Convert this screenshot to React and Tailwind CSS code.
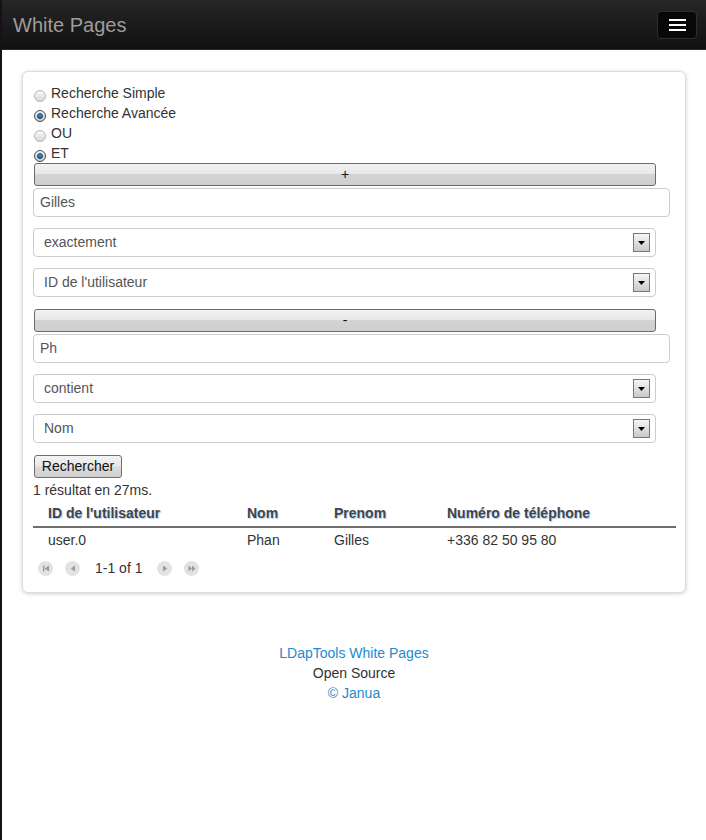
import React from "react";

function Radio({ checked, label }) {
  return (
    <div className="flex h-5 items-center">
      <span
        className={
          "mt-[6px] mr-[5px] ml-[1px] flex h-[12px] w-[12px] items-center justify-center rounded-full border " +
          (checked
            ? "border-[#4a4a4a] bg-gradient-to-b from-[#f4f4f4] to-[#c8c8c8]"
            : "border-[#b5b5b5] bg-gradient-to-b from-[#f8f8f8] to-[#d8d8d8]")
        }
      >
        {checked && (
          <span className="h-[6px] w-[6px] rounded-full bg-gradient-to-b from-[#4aa6e8] to-[#0b5ea6] border border-[#1b3a5a]" />
        )}
      </span>
      <span>{label}</span>
    </div>
  );
}

function GrayButton({ children, className }) {
  return (
    <div
      className={
        "flex h-[23px] w-[622px] ml-[1px] items-center justify-center rounded-[3px] border border-[#6b6b6b] bg-[linear-gradient(to_bottom,#f2f2f2_0%,#e8e8e8_45%,#d3d3d3_50%,#cfcfcf_100%)] text-[14px] text-[#111] " +
        (className || "")
      }
    >
      {children}
    </div>
  );
}

function TextInput({ value, className }) {
  return (
    <div
      className={
        "flex h-[29px] w-[637px] items-center rounded-[4px] border border-[#cccccc] bg-white pl-[6px] text-[14px] text-[#555] " +
        (className || "")
      }
    >
      {value}
    </div>
  );
}

function Select({ value, className }) {
  return (
    <div
      className={
        "flex h-[29px] w-[623px] items-center justify-between rounded-[4px] border border-[#cccccc] bg-white pl-[10px] pr-[5px] text-[14px] text-[#555] " +
        (className || "")
      }
    >
      <span>{value}</span>
      <span className="flex h-[19px] w-[17px] items-center justify-center border border-[#777] bg-gradient-to-b from-[#f6f6f6] to-[#c9c9c9]">
        <svg width="7" height="4" viewBox="0 0 7 4">
          <path d="M0 0 L7 0 L3.5 4 Z" fill="#000" />
        </svg>
      </span>
    </div>
  );
}

function PagerIcon({ type }) {
  return (
    <span className="flex h-[15px] w-[15px] items-center justify-center rounded-full bg-[#e2e2e2]">
      <svg width="8" height="7" viewBox="0 0 8 7">
        {type === "first" && (
          <>
            <rect x="1" y="0.5" width="1.4" height="6" fill="#9a9a9a" />
            <path d="M7 0.5 L2.6 3.5 L7 6.5 Z" fill="#9a9a9a" />
          </>
        )}
        {type === "prev" && <path d="M6 0.5 L1.8 3.5 L6 6.5 Z" fill="#9a9a9a" />}
        {type === "next" && <path d="M2 0.5 L6.2 3.5 L2 6.5 Z" fill="#9a9a9a" />}
        {type === "last" && (
          <>
            <path d="M0.5 0.5 L4 3.5 L0.5 6.5 Z" fill="#9a9a9a" />
            <path d="M4 0.5 L7.5 3.5 L4 6.5 Z" fill="#9a9a9a" />
          </>
        )}
      </svg>
    </span>
  );
}

export default function App() {
  return (
    <div
      className="min-h-[840px] border-l-2 border-[#141418] bg-white text-[14px] text-[#333]"
      style={{ fontFamily: '"Liberation Sans", Arial, sans-serif' }}
    >
      <header className="flex h-[50px] items-center justify-between border-b border-[#2a2a2a] bg-gradient-to-b from-[#262626] to-[#111111] pl-[11px] pr-[9px]">
        <span className="text-[20px] text-[#9d9d9d]">White Pages</span>
        <span className="flex h-[28px] w-[40px] flex-col items-center justify-center gap-[3px] rounded-[4px] border border-[#2e2e2e] bg-[#080808]">
          <span className="h-[2px] w-[17px] bg-white" />
          <span className="h-[2px] w-[17px] bg-white" />
          <span className="h-[2px] w-[17px] bg-white" />
        </span>
      </header>

      <div className="mx-[20px] mt-[21px] rounded-[6px] border border-[#dcdcdc] bg-white pl-[10px] pt-[11px] pb-[16px] shadow-[0_1px_4px_rgba(0,0,0,0.18)]">
        <Radio label="Recherche Simple" />
        <Radio checked label="Recherche Avancée" />
        <Radio label="OU" />
        <Radio checked label="ET" />

        <GrayButton>+</GrayButton>
        <TextInput value="Gilles" className="mt-[2px]" />
        <Select value="exactement" className="mt-[11px]" />
        <Select value="ID de l'utilisateur" className="mt-[11px]" />

        <GrayButton className="mt-[12px]">-</GrayButton>
        <TextInput value="Ph" className="mt-[2px]" />
        <Select value="contient" className="mt-[11px]" />
        <Select value="Nom" className="mt-[11px]" />

        <div className="mt-[12px] ml-[1px] flex h-[23px] w-[88px] items-center justify-center rounded-[3px] border border-[#707070] bg-[linear-gradient(to_bottom,#f3f3f3_0%,#e9e9e9_45%,#dadada_55%,#d0d0d0_100%)] text-[14px] text-[#111]">
          Rechercher
        </div>
        <div className="mt-[3px] h-[18px] leading-[18px]">1 résultat en 27ms.</div>

        <div className="mt-[2px] w-[643px]">
          <div className="flex h-[27px] items-center border-b-2 border-[#6e6e6e] font-bold text-[#444] [text-shadow:1px_1px_1px_#a9cdf2]">
            <span className="w-[214px] pl-[15px]">ID de l'utilisateur</span>
            <span className="w-[87px]">Nom</span>
            <span className="w-[113px]">Prenom</span>
            <span>Numéro de téléphone</span>
          </div>
          <div className="flex h-[25px] items-center">
            <span className="w-[214px] pl-[15px]">user.0</span>
            <span className="w-[87px]">Phan</span>
            <span className="w-[113px]">Gilles</span>
            <span>+336 82 50 95 80</span>
          </div>
          <div className="mt-[7px] flex h-[16px] items-center pl-[5px]">
            <PagerIcon type="first" />
            <span className="w-[12px]" />
            <PagerIcon type="prev" />
            <span className="ml-[15px] mr-[15px]">1-1 of 1</span>
            <PagerIcon type="next" />
            <span className="w-[12px]" />
            <PagerIcon type="last" />
          </div>
        </div>
      </div>

      <div className="mt-[50px] flex flex-col items-center leading-[20px]">
        <span className="text-[#2489ce]">LDapTools White Pages</span>
        <span>Open Source</span>
        <span className="text-[#2489ce]">© Janua</span>
      </div>
    </div>
  );
}
